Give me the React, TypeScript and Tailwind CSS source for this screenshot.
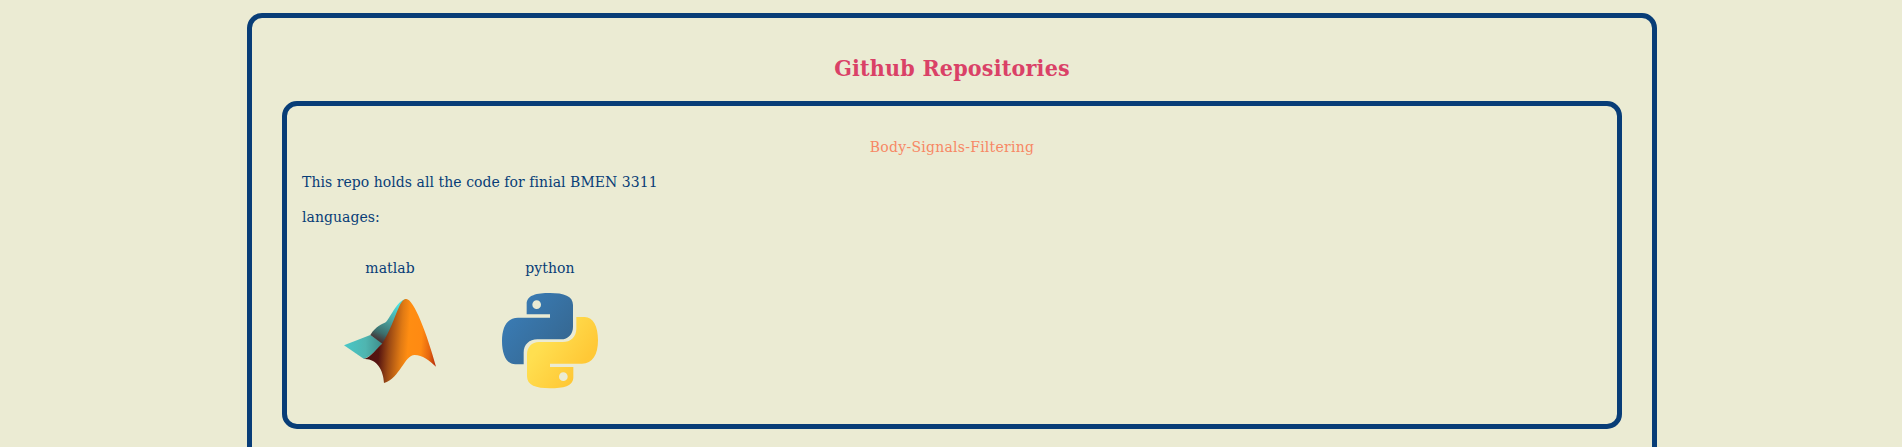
import type { ReactNode } from 'react';

function MatlabLogo() {
  return (
    <svg viewBox="0 0 360 360" className="block size-[120px]" aria-hidden="true">
      <defs>
        <linearGradient id="m-wing" x1="42" y1="0" x2="160" y2="0" gradientUnits="userSpaceOnUse">
          <stop offset="0" stopColor="#48c8c8" />
          <stop offset="0.55" stopColor="#4fb5b0" />
          <stop offset="1" stopColor="#3d8a88" />
        </linearGradient>
        <linearGradient id="m-back" x1="205" y1="75" x2="150" y2="192" gradientUnits="userSpaceOnUse">
          <stop offset="0" stopColor="#4be0e0" />
          <stop offset="0.4" stopColor="#4aa5a2" />
          <stop offset="0.75" stopColor="#3c6e6c" />
          <stop offset="1" stopColor="#4a2023" />
        </linearGradient>
        <linearGradient id="m-peak" x1="102" y1="225" x2="318" y2="240" gradientUnits="userSpaceOnUse">
          <stop offset="0" stopColor="#4e0f10" />
          <stop offset="0.2" stopColor="#561410" />
          <stop offset="0.34" stopColor="#9c4a14" />
          <stop offset="0.5" stopColor="#e07a14" />
          <stop offset="0.6" stopColor="#ff8d12" />
          <stop offset="0.78" stopColor="#ff8a12" />
          <stop offset="0.9" stopColor="#e5660f" />
          <stop offset="1" stopColor="#b52c0c" />
        </linearGradient>
      </defs>
      <path d="M42 196 L121 165 L158 190 C145 206 122 230 102 237 Z" fill="url(#m-wing)" />
      <path d="M121 165 C138 137 155 134 168 126 C185 107 202 60 229 57 L205 110 L158 192 Z" fill="url(#m-back)" />
      <path
        d="M102 237 C124 230 139 207 156 191 C179 157 193 112 207 81 C215 64 221 57 229 57 C251 57 291 161 318 260 C298 242 277 225 254 225 C223 225 210 295 162 309 C160 270 140 235 102 237 Z"
        fill="url(#m-peak)"
      />
    </svg>
  );
}

const SNAKE =
  'M110 103 V72 C110 45 140 39 180 39 C222 39 249 48 249 75 V140 C249 162 235 178 213 178 H142 C118 178 101 194 101 218 V253 H76 C50 253 36 225 36 183 C36 140 52 113 84 113 H180 V103 Z M127 74 a13 13 0 1 0 26 0 a13 13 0 1 0 -26 0 Z';

function PythonLogo() {
  return (
    <svg viewBox="0 0 360 360" className="block size-[120px]" aria-hidden="true">
      <defs>
        <linearGradient id="p-blue" x1="50" y1="60" x2="215" y2="195" gradientUnits="userSpaceOnUse">
          <stop offset="0" stopColor="#3a7eb9" />
          <stop offset="1" stopColor="#366994" />
        </linearGradient>
        <linearGradient id="p-yellow" x1="215" y1="160" x2="100" y2="80" gradientUnits="userSpaceOnUse">
          <stop offset="0" stopColor="#ffdf50" />
          <stop offset="1" stopColor="#ffc836" />
        </linearGradient>
      </defs>
      <path d={SNAKE} fillRule="evenodd" fill="url(#p-blue)" />
      <path d={SNAKE} fillRule="evenodd" fill="url(#p-yellow)" transform="rotate(180 180 182)" />
    </svg>
  );
}

function Language({ name, children }: { name: string; children: ReactNode }) {
  return (
    <li className="flex w-40 flex-col items-center">
      <span>{name}</span>
      <div className="mt-[2px]">{children}</div>
    </li>
  );
}

export default function App() {
  return (
    <div className="h-[447px] overflow-hidden bg-[#ebebd3] pt-[13px] pl-0.5 font-['Rockwell','DejaVu_Serif',serif] text-[14px] leading-[19px] tracking-[0.05px] text-[#083d77]">
      <section className="mx-auto h-[600px] w-[1410px] rounded-[15px] border-5 border-[#083d77] px-[30px] pt-[36px]">
        <h2 className="text-center font-['Rockwell','DejaVu_Serif_Condensed','DejaVu_Serif',serif] text-[23px] leading-7 font-bold tracking-[0.2px] text-[#da4167]">
          Github Repositories
        </h2>
        <article className="mt-[19px] h-[328px] rounded-[15px] border-5 border-[#083d77] px-[15px] pt-[32px]">
          <a href="#" className="block text-center tracking-[0.25px] text-[#f78764]">
            Body-Signals-Filtering
          </a>
          <p className="mt-4">This repo holds all the code for finial BMEN 3311</p>
          <p className="mt-4">languages:</p>
          <ul className="mt-8 ml-2 flex">
            <Language name="matlab">
              <MatlabLogo />
            </Language>
            <Language name="python">
              <PythonLogo />
            </Language>
          </ul>
        </article>
      </section>
    </div>
  );
}
